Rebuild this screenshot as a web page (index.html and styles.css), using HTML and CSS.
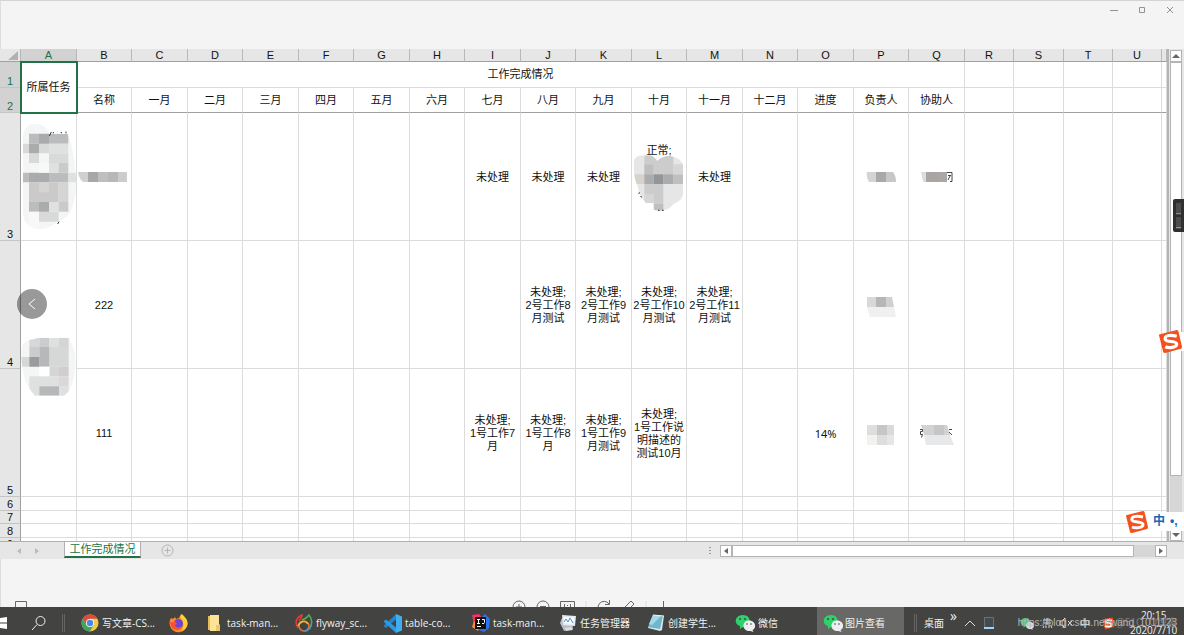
FILE: index.html
```
<!DOCTYPE html>
<html lang="zh-CN">
<head>
<meta charset="utf-8">
<title>图片查看</title>
<link rel="stylesheet" href="styles.css">
</head>
<body>
<div class="viewer">
  <header class="titlebar">
    <button class="win" aria-label="最小化"><svg width="8" height="8" viewBox="0 0 8 8"><path d="M0 4.500h8"/></svg></button>
    <button class="win" aria-label="最大化"><svg width="8" height="8" viewBox="0 0 8 8"><path d="M1.500 1.500h5v5h-5z"/></svg></button>
    <button class="win" aria-label="关闭"><svg width="8" height="8" viewBox="0 0 8 8"><path d="M1 1l6 6M7 1l-6 6"/></svg></button>
  </header>

  <main class="sheet">
    <div class="pane">
      <table class="grid">
        <colgroup><col class="c-num"><col class="c56"><col class="c55"><col class="c56"><col class="c55"><col class="c56"><col class="c55"><col class="c56"><col class="c55"><col class="c56"><col class="c55"><col class="c56"><col class="c55"><col class="c56"><col class="c55"><col class="c56"><col class="c55"><col class="c56"><col class="c49"><col class="c50"><col class="c49"><col class="c49"><col></colgroup>
        <thead>
          <tr><th class="corner"><svg width="10" height="9" viewBox="0 0 10 9"><path d="M10 0v9H0z"/></svg></th><th class="on">A</th><th>B</th><th>C</th><th>D</th><th>E</th><th>F</th><th>G</th><th>H</th><th>I</th><th>J</th><th>K</th><th>L</th><th>M</th><th>N</th><th>O</th><th>P</th><th>Q</th><th>R</th><th>S</th><th>T</th><th>U</th><th></th></tr>
        </thead>
        <tbody>
          <tr class="r-title"><th class="on">1</th><td class="selected" rowspan="2">所属任务</td><td colspan="16">工作完成情况</td><td></td><td></td><td></td><td></td><td></td></tr>
          <tr class="r-head"><th class="on">2</th><td>名称</td><td>一月</td><td>二月</td><td>三月</td><td>四月</td><td>五月</td><td>六月</td><td>七月</td><td>八月</td><td>九月</td><td>十月</td><td>十一月</td><td>十二月</td><td>进度</td><td>负责人</td><td>协助人</td><td></td><td></td><td></td><td></td><td></td></tr>
          <tr class="r-task"><th>3</th>
            <td><svg class="mosaic" width="55" height="107" viewBox="63 247 165 321">
              <clipPath id="m1"><path d="M69 285q4-36 40-36q30 0 38 30h56q18 40 24 118l2 28q-4 80-30 104l-22 14h-6q-20 22-52 22q-44 0-50-44z"/></clipPath>
              <g clip-path="url(#m1)"><path fill="#f4f5f5" d="M60 240h180v330H60z"/><path fill="#d9d9d9" d="M69 309h18v29H69zM117 309h30v29h-30zM87 338h30v29H87zM147 338h58v29h-58zM117 513h59v30h-59z"/><path fill="#bbbcbd" d="M87 279h30v30H87zM147 279h58v30h-58zM69 396h18v29H69zM147 396h58v29h-58zM87 484h30v29H87z"/><path fill="#a9abad" d="M117 279h30v30h-30zM87 309h30v29H87zM87 396h60v29H87zM117 484h30v29h-30z"/><path fill="#dfe1e1" d="M147 309h58v29h-58zM147 367h29v29h-29zM205 396h25v29h-25zM147 484h29v29h-29z"/><path fill="#cbcaca" d="M176 367h29v29h-29zM87 425h89v59H87zM176 484h29v29h-29z"/><path fill="#d5d4d3" d="M176 425h29v59h-29zM117 425h30v30h-30z"/><path fill="#f8f8f8" d="M117 367h30v29h-30zM87 513h30v52H87z"/></g>
              <path class="ink" d="M154 274l-6 12M160 274v4M182 276h4M198 273v5M177 543l-4 7"/>
            </svg></td>
            <td class="left"><svg class="mosaic" width="51" height="10" viewBox="0 0 51 10"><path fill="#d0d0cf" d="M0 0h10v10H5q-4-3-5-10z"/><path fill="#a5a8a8" d="M10 0h10v10H10z"/><path fill="#c0bfbf" d="M20 0h10v10H20z"/><path fill="#b7b9b8" d="M30 0h10v10H30z"/><path fill="#cbcdcc" d="M40 0h9v10h-9z"/></svg></td>
            <td></td><td></td><td></td><td></td><td></td><td></td><td>未处理</td><td>未处理</td><td>未处理</td>
            <td>正常;<svg class="mosaic" width="52" height="56" viewBox="545 338 156 168">
              <clipPath id="m2"><path d="M547 365q-2-20 20-26h28q14 4 23 17q14-15 38-15q32 6 39 25v90q-2 20-28 28q-12 18-36 21l-24-2v-20l-24-2q-18-18-24-50q-12-24-12-66z"/></clipPath>
              <g clip-path="url(#m2)"><path fill="#e5e6e5" d="M540 330h160v180H540z"/><path fill="#ccc" d="M579 338h87v28h-87zM607 366h60v30h-60zM579 425h57v30h-57zM607 455h29v29h-29z"/><path fill="#bfbfbd" d="M579 366h28v30h-28zM666 396h30v29h-30zM607 484h29v24h-29z"/><path fill="#d7d2cb" d="M545 396h34v29h-34z"/><path fill="#aaacae" d="M579 396h28v29h-28zM636 396h30v29h-30z"/><path fill="#949597" d="M607 396h29v29h-29z"/><path fill="#d5d7d7" d="M666 366h30v30h-30zM579 455h28v29h-28z"/></g>
              <path class="ink" d="M565 450l-3 5M567 462l5 3M620 504h5M632 504h5"/>
            </svg></td>
            <td>未处理</td><td></td><td></td>
            <td><svg class="mosaic" width="30" height="10" viewBox="0 0 30 10"><path fill="#d5d3d3" d="M1 0h9v10H3q-3-5-2-10z"/><path fill="#a9a9a9" d="M10 0h10v10H10z"/><path fill="#c5c7c8" d="M20 0h7q3 4 3 10H20z"/></svg></td>
            <td><svg class="mosaic" width="32" height="10" viewBox="0 0 32 10"><path fill="#dedbd9" d="M0 0h5v10H2z"/><path fill="#aaa5a3" d="M5 0h12v10H5z"/><path fill="#a8a8a8" d="M17 0h9v10h-9z"/><path class="ink1" d="M26 .500h5v9h-2M27 3.500h3M29 4l-2 4"/></svg></td>
            <td></td><td></td><td></td><td></td><td></td></tr>
          <tr class="r-task"><th>4</th>
            <td rowspan="2"><svg class="mosaic high" width="55" height="60" viewBox="62 321 165 180">
              <clipPath id="m3"><path d="M64 352q8-24 40-25l6-4h95q18 26 21 70q-2 60-20 90l-15 14h-87q-24-26-34-60q-10-50-6-85z"/></clipPath>
              <g clip-path="url(#m3)"><path fill="#f4f5f5" d="M60 320h170v180H60z"/><path fill="#d6d7d7" d="M87 321h30v30H87zM147 351h58v59h-58zM60 381h27v29H60z"/><path fill="#cbccce" d="M117 321h30v30h-30zM87 351h30v30H87z"/><path fill="#dfe0e0" d="M147 321h29v30h-29zM87 439h89v30H87zM87 469h30v30H87zM176 469h29v30h-29z"/><path fill="#d5d5d5" d="M176 321h29v30h-29zM147 410h29v29h-29z"/><path fill="#b7b8b9" d="M117 351h30v59h-30zM117 469h59v30h-59z"/><path fill="#9b9b9b" d="M87 381h30v29H87z"/><path fill="#d2cdce" d="M176 410h29v29h-29z"/><path fill="#dbd8d8" d="M176 439h29v30h-29z"/><path fill="#fff" d="M117 410h30v29h-30z"/></g>
            </svg></td>
            <td>222</td><td></td><td></td><td></td><td></td><td></td><td></td><td></td><td>未处理;<br>2号工作8<br>月测试</td><td>未处理;<br>2号工作9<br>月测试</td><td>未处理;<br>2号工作10<br>月测试</td><td>未处理;<br>2号工作11<br>月测试</td><td></td><td></td>
            <td><svg class="mosaic low" width="30" height="20" viewBox="0 0 30 20"><path fill="#f0f0f0" d="M1 10h27l2 10H4z"/><path fill="#d8d8d8" d="M1 0h9v10H1z"/><path fill="#b6b6b6" d="M10 0h10v10H10z"/><path fill="#d0d0d0" d="M20 0h6l2 10h-8z"/></svg></td>
            <td></td><td></td><td></td><td></td><td></td><td></td></tr>
          <tr class="r-task"><th>5</th><td>111</td><td></td><td></td><td></td><td></td><td></td><td></td><td>未处理;<br>1号工作7<br>月</td><td>未处理;<br>1号工作8<br>月</td><td>未处理;<br>1号工作9<br>月测试</td><td>未处理;<br>1号工作说<br>明描述的<br>测试10月</td><td></td><td></td><td class="pct">14%</td>
            <td><svg class="mosaic low" width="28" height="20" viewBox="0 0 28 20"><path fill="#dededd" d="M0 0h10v10H0zM10 10h10v10H10z"/><path fill="#c6c6c5" d="M10 0h10v10H10z"/><path fill="#d9dadb" d="M20 0h7v10h-7z"/><path fill="#f2f2f1" d="M0 10h10v10H0z"/><path fill="#e5e6e6" d="M20 10h7v10h-7z"/></svg></td>
            <td><svg class="mosaic low" width="34" height="20" viewBox="0 0 34 20"><path fill="#d2d2d2" d="M1 0h26l3 10H4z"/><path fill="#c6c6c5" d="M14 0h10v10H14z"/><path fill="#e7e8e9" d="M4 10h26l4 10H6z"/><path class="ink1" d="M0 4.500h2.500v2H.5v3h2l-1 3M29 4.500h3M29 7l3 3"/></svg></td>
            <td></td><td></td><td></td><td></td><td></td></tr>
          <tr class="r-even"><th>6</th><td></td><td></td><td></td><td></td><td></td><td></td><td></td><td></td><td></td><td></td><td></td><td></td><td></td><td></td><td></td><td></td><td></td><td></td><td></td><td></td><td></td><td></td></tr>
          <tr class="r-odd"><th>7</th><td></td><td></td><td></td><td></td><td></td><td></td><td></td><td></td><td></td><td></td><td></td><td></td><td></td><td></td><td></td><td></td><td></td><td></td><td></td><td></td><td></td><td></td></tr>
          <tr class="r-even"><th>8</th><td></td><td></td><td></td><td></td><td></td><td></td><td></td><td></td><td></td><td></td><td></td><td></td><td></td><td></td><td></td><td></td><td></td><td></td><td></td><td></td><td></td><td></td></tr>
          <tr class="r-odd"><th>9</th><td></td><td></td><td></td><td></td><td></td><td></td><td></td><td></td><td></td><td></td><td></td><td></td><td></td><td></td><td></td><td></td><td></td><td></td><td></td><td></td><td></td><td></td></tr>
        </tbody>
      </table>
    </div>
    <div class="vscroll">
      <button class="sbtn" aria-label="向上"><svg width="8" height="4" viewBox="0 0 8 4"><path d="M0 4l4-4 4 4z"/></svg></button>
      <div class="vthumb"></div>
      <div class="vrest"></div>
      <button class="sbtn" aria-label="向下"><svg width="8" height="4" viewBox="0 0 8 4"><path d="M0 0l4 4 4-4z"/></svg></button>
    </div>
  </main>

  <nav class="tabs">
    <div class="tabnav"><svg width="22" height="6" viewBox="0 0 22 6"><path d="M4 0v6L0 3zM18 0v6l4-3z"/></svg></div>
    <button class="tab">工作完成情况</button>
    <button class="add" aria-label="新工作表"><svg width="13" height="13" viewBox="0 0 13 13"><circle cx="6.500" cy="6.500" r="5.500"/><path d="M6.500 3.500v6M3.500 6.500h6"/></svg></button>
    <div class="hscroll">
      <svg class="dots" width="2" height="8" viewBox="0 0 2 8"><path d="M0 0h2v1H0zM0 3h2v1H0zM0 6h2v1H0z"/></svg>
      <button class="sbtn" aria-label="向左"><svg width="4" height="6" viewBox="0 0 4 6"><path d="M4 0v6L0 3z"/></svg></button>
      <div class="hthumb"></div>
      <div class="hrest"></div>
      <button class="sbtn" aria-label="向右"><svg width="4" height="6" viewBox="0 0 4 6"><path d="M0 0v6l4-3z"/></svg></button>
    </div>
  </nav>

  <div class="tools">
    <svg class="screen" width="14" height="14" viewBox="0 0 14 14"><path d="M.5 1.500h11v8H.5z"/></svg>
    <div class="toolset">
      <svg width="14" height="14" viewBox="0 0 14 14"><circle cx="7" cy="7" r="6"/><path d="M4 7h6M7 4v6"/></svg>
      <svg width="14" height="14" viewBox="0 0 14 14"><circle cx="7" cy="7" r="6"/><path d="M4 6.500h6"/></svg>
      <svg class="fit" width="15" height="14" viewBox="0 0 15 14"><path d="M.5 1.500h14v11H.5zM4.500 4v6M10.500 4v6M7.500 5v1"/></svg>
      <svg class="sep" width="2" height="14" viewBox="0 0 2 14"><path d="M1 1v12"/></svg>
      <svg width="14" height="14" viewBox="0 0 14 14"><path d="M12 4A6 6 0 1 0 13 8M12.500 0v4.500H8"/></svg>
      <svg width="14" height="14" viewBox="0 0 14 14"><path d="M2 12l1-4 7-7 3 3-7 7z"/></svg>
      <svg class="sep" width="2" height="14" viewBox="0 0 2 14"><path d="M1 1v12"/></svg>
      <svg width="14" height="14" viewBox="0 0 14 14"><path d="M6.500 1v9M3 7l3.500 4L10 7"/></svg>
    </div>
  </div>

  <footer class="taskbar">
    <svg class="start" width="7" height="14" viewBox="0 0 7 14"><path fill="#fff" d="M0 2l7-1v5.500H0zM0 7.500h7V13l-7-1z"/></svg>
    <svg class="search" width="16" height="16" viewBox="0 0 16 16"><circle cx="9.500" cy="6" r="4.500"/><path d="M6 9.500L1 15"/></svg>
    <div class="bar"></div>
    <button class="app"><svg width="18" height="18" viewBox="0 0 18 18"><circle cx="9" cy="9" r="8.500" fill="#f6c944"/><path fill="#dc4b3e" d="M1.600 4.700A8.500 8.500 0 0 1 16.400 4.700H9L5.300 11z"/><path fill="#3da55c" d="M1.600 4.700L5.300 11l7.400 0L8.800 17.500A8.500 8.500 0 0 1 1.600 4.700z"/><circle cx="9" cy="9" r="4" fill="#fff"/><circle cx="9" cy="9" r="3.200" fill="#4688f1"/></svg>写文章-CS...</button>
    <button class="app only" aria-label="Firefox"><svg width="19" height="19" viewBox="0 0 19 19"><path fill="#ff8a1f" d="M2 4l2 1 2-2 1 2 3-1 2-4c3 3 7 5 6.500 10.500A9 9 0 0 1 1 12C0 9 .5 6 2 4z"/><path fill="#ffcf35" d="M11 3l2-3c3 3 6 6 5.500 10s-4 7-7 7c4-3 4-8-.5-14z"/><circle cx="9.500" cy="9.500" r="4.500" fill="#6b45d4"/><path fill="#f4503d" d="M1 8c2 1 4-1 6 0l1 2-2 1c1 3 5 3 7 2-3 5-11 4-12-5z"/></svg></button>
    <button class="app folder"><svg width="14" height="18" viewBox="0 0 14 18"><path fill="#e9bd58" d="M1 2h7v14H1z"/><path fill="#fbe397" d="M3 1h9v9l1 1v6H3z"/><path fill="#ecc766" d="M9 11h4v6H9z"/></svg>task-man...</button>
    <button class="app"><svg width="18" height="18" viewBox="0 0 18 18" fill="none" stroke-width="1.600"><circle cx="9" cy="12" r="5" stroke="#e8772c"/><path stroke="#e04038" d="M3 14C-1 8 2 3 7 1c0 3-1 4-3 6"/><path stroke="#4eae55" d="M7 6c3-1 5-2 7-5 3 4 4 9 0 14"/><path stroke="#3b8fd8" d="M9 17c3 1 6-2 7-5"/><path stroke="#f0b52f" d="M3 12c2-5 7-6 10-2"/></svg>flyway_sc...</button>
    <button class="app"><svg width="19" height="19" viewBox="0 0 19 19"><path fill="#1f86d0" d="M13 0v5.500L3 14l-2-1.500v-1z"/><path fill="#2a9ae4" d="M1 7l2-1.500 10 8V19L1 8z"/><path fill="#41adf0" d="M13 0l6 2.500v14L13 19z"/></svg>table-co...</button>
    <button class="app"><svg width="19" height="18" viewBox="0 0 19 18"><path fill="#f7306c" d="M1 1l7-1 4 5-9 6z"/><path fill="#fb8a31" d="M3 7l-2 6 6 4 2-5z"/><path fill="#2c73ef" d="M11 3l3-3 5 5-1 9-5 4-5-2z"/><path fill="#111" d="M4 3h11v12H4z"/><path d="M6 5.500h3M7.500 5v4M6 9.500h3M11 5.500h2.500v3q0 1.500-2.500 1M6 12.500h4" fill="none" stroke="#fff"/></svg>task-man...</button>
    <button class="app"><svg width="18" height="18" viewBox="0 0 18 18"><path fill="#b8bfc6" d="M1 9l2-5 10 1 1 10-9 2z"/><path fill="#e5ebef" d="M3 1l14 1-1 10-12-1z"/><path fill="#fff" d="M5 3l10 1-1 6-9-1z"/><path d="M5 8l2-3 2 3 2-4 3 5" fill="none" stroke="#3994d0"/><path fill="#d8dde0" d="M6 14l6-1 2 3-7 1z"/></svg>任务管理器</button>
    <button class="app"><svg width="18" height="18" viewBox="0 0 18 18"><path fill="#d9e6e8" d="M6 1l11 1-2 14-2 1-12-3z"/><path fill="#6fb6cd" d="M6 1l10 1-3 13-12-2z"/><path fill="#a5d9e7" d="M6 1l8 1-9 9-3-1z"/><path d="M6 1l11 1" stroke="#eef3f3"/></svg>创建学生...</button>
    <button class="app"><svg width="20" height="18" viewBox="0 0 20 18"><path fill="#2ed16b" d="M8 1c9 0 9 12 0 12l-3 2v-3C-2 10 0 1 8 1z"/><path fill="#eee" d="M13.500 6.500c8 0 8 8 4 9.500l1 2-3-1c-9 1-9-10-2-10.500z"/><circle cx="5" cy="5" r="1"/><circle cx="10" cy="5" r="1"/><circle cx="12" cy="10" r=".8"/><circle cx="16" cy="10" r=".8"/></svg>微信</button>
    <button class="app active"><svg width="20" height="18" viewBox="0 0 20 18"><path fill="#2ed16b" d="M8 1c9 0 9 12 0 12l-3 2v-3C-2 10 0 1 8 1z"/><path fill="#eee" d="M13.500 6.500c8 0 8 8 4 9.500l1 2-3-1c-9 1-9-10-2-10.500z"/><circle cx="5" cy="5" r="1"/><circle cx="10" cy="5" r="1"/><circle cx="12" cy="10" r=".8"/><circle cx="16" cy="10" r=".8"/></svg>图片查看</button>
    <div class="tray">
      <div class="bar"></div>
      <span>桌面</span><span class="more">»</span>
      <svg class="up" width="12" height="8" viewBox="0 0 12 8"><path d="M1 7l5-5 5 5" fill="none" stroke="#ddd"/></svg>
      <svg class="box" width="10" height="12" viewBox="0 0 10 12"><path d="M.5.5h9v10h-9z" fill="#434b50" stroke="#65737c"/><path d="M0 11h10" stroke="#9ad6f8" stroke-width="2"/></svg>
      <svg class="wx" width="14" height="13" viewBox="0 0 20 18"><path fill="#42cd78" d="M8 1c9 0 9 12 0 12l-3 2v-3C-2 10 0 1 8 1z"/><path fill="#ddd" d="M13.500 6.500c8 0 8 8 4 9.500l1 2-3-1c-9 1-9-10-2-10.500z"/></svg>
      <svg class="line" width="40" height="12" viewBox="0 0 40 12"><path d="M1 3h8M5 1v7M2 6h7M1 11l1-2M4 11V9M7 11V9M10 11L9 9M18 4h2l3-3v10l-3-3h-2zM26 4l4 4M30 4l-4 4"/></svg>
      <span class="ime">中</span>
      <svg class="sogou" width="13" height="13" viewBox="0 0 22 22"><path fill="#f04c1c" d="M1 4l17-3 3 16-16 4z"/><path d="M17 6C8 4 5 7 6 9s10 0 10 4-7 4-11 2" fill="none" stroke="#fff" stroke-width="3"/></svg>
      <time class="clock">20:15<br>2020/7/10</time>
    </div>
    <span class="mark mark2">@51CTO博客</span>
    <span class="mark">https://blog.csdn.net/wang_1011123</span>
  </footer>

  <button class="prev" aria-label="上一张"><svg width="10" height="12" viewBox="0 0 10 12"><path d="M8 1L2 6l6 5"/></svg></button>
  <div class="meter"><svg width="11" height="33" viewBox="0 0 11 33"><path fill="#4d4d4d" d="M3 4h5v12H3zM3 18h5v12H3z"/><path stroke="#c57a24" d="M3 14.500h5"/><path stroke="#63c32a" d="M3 28.500h5"/></svg></div>
  <div class="dock"><svg width="23" height="23" viewBox="0 0 22 22"><path fill="#f4511e" d="M0 5q0-1 1-1L17 0q1 0 1.500 1L22 16q0 2-1 2L6 22q-2 0-2-1z"/><path d="M17 6C9 4 5 6 6 9s11 1 11 4.500-8 4-11 2.500" fill="none" stroke="#fff" stroke-width="3"/></svg></div>
  <div class="imebar"><svg width="22" height="22" viewBox="0 0 22 22"><path fill="#f4511e" d="M0 5q0-1 1-1L17 0q1 0 1.500 1L22 16q0 2-1 2L6 22q-2 0-2-1z"/><path d="M17 6C9 4 5 6 6 9s11 1 11 4.500-8 4-11 2.500" fill="none" stroke="#fff" stroke-width="3"/></svg><span>中</span><span>•,</span></div>
</div>
</body>
</html>
```
FILE: styles.css
```
* { box-sizing: border-box; }
body {
  margin: 0;
  background: #f4f4f4;
  font-family: "Liberation Sans", "Noto Sans CJK SC", sans-serif;
  font-size: 11px;
  line-height: 13px;
  color: #111;
}
button {
  margin: 0;
  padding: 0;
  border: 0;
  background: none;
  font: inherit;
  color: inherit;
  display: flex;
  align-items: center;
}
svg { display: block; flex: none; }
.viewer {
  position: relative;
  display: flex;
  flex-direction: column;
  height: 100vh;
  overflow: hidden;
}

.titlebar {
  flex: none;
  display: flex;
  justify-content: flex-end;
  gap: 20px;
  height: 49px;
  padding: 5px 10px 0;
  border-top: 1px solid #d4d4d4;
  border-left: 1px solid #ddd;
  align-items: flex-start;
}
.win svg { fill: none; stroke: #929292; }

.sheet {
  flex: 1;
  min-height: 0;
  display: flex;
  background: #e6e6e6;
}
.pane {
  flex: 1;
  min-width: 0;
  overflow: hidden;
  background: #fff;
  border-right: 1px solid #b4b4b4;
  border-bottom: 1px solid #b0b0b0;
}
.grid {
  width: 100%;
  table-layout: fixed;
  border-collapse: separate;
  border-spacing: 0;
}
.c-num { width: 21px; }
.c55 { width: 55px; }
.c56 { width: 56px; }
.c49 { width: 49px; }
.c50 { width: 50px; }
.grid th, .grid td {
  padding: 0;
  text-align: center;
  border-right: 1px solid #dcdcdc;
  border-bottom: 1px solid #dcdcdc;
}
.grid th {
  font-weight: 400;
  line-height: 12px;
  background: #e6e6e6;
}
.grid thead th {
  height: 13px;
  border-right-color: #b8b8b8;
  border-bottom-color: #a0a0a0;
}
.grid tbody th {
  vertical-align: bottom;
  border-right-color: #a0a0a0;
  border-bottom-color: #c4c4c4;
}
.grid th.on { background: #d2d2d2; color: #217346; }
.corner svg { margin: 0 2px 0 auto; fill: #b2b2b2; }
.grid td.selected { outline: 2px solid #217346; outline-offset: -1px; }
.grid td.left { text-align: left; padding-left: 1px; }
.r-title { height: 26px; }
.r-head { height: 25px; }
.r-head td, .grid td.selected { border-bottom-color: #a0a0a0; }
.grid .r-task td { padding-top: 2px; }
.grid td.pct { font-family: "Noto Sans", sans-serif; }
.r-task { height: 128px; }
.r-even { height: 14px; }
.r-odd { height: 13px; }
.mosaic { margin: -2px auto 0; }
.mosaic.low { margin-top: 2px; }
.mosaic.high { margin-bottom: 3px; }
.left .mosaic { margin-left: 0; }
.ink { fill: none; stroke: #333; stroke-width: 3; }
.ink1 { fill: none; stroke: #444; }

.vscroll {
  flex: none;
  display: flex;
  flex-direction: column;
  width: 16px;
  padding: 1px 2px 0 1px;
  border-left: 1px solid #b4b4b4;
  border-bottom: 1px solid #b0b0b0;
}
.sbtn {
  flex: none;
  justify-content: center;
  width: 12px;
  height: 12px;
  background: #fff;
  border: 1px solid #b4b4b4;
}
.sbtn svg { fill: #666; }
.vthumb { flex: 415; width: 12px; background: #fff; border: 1px solid #b4b4b4; }
.vrest { flex: 53; width: 12px; background: #d6d6d6; }

.tabs {
  flex: none;
  display: flex;
  align-items: flex-start;
  height: 17px;
  background: #e6e6e6;
}
.tabnav { width: 64px; padding: 6px 0 0 17px; }
.tabnav svg { fill: #bbb; }
.tab {
  justify-content: center;
  width: 77px;
  height: 16px;
  background: #fff;
  color: #217346;
  border: 1px solid #b0b0b0;
  border-top: 0;
  border-bottom: 2px solid #217346;
}
.add { margin: 2px 0 0 20px; }
.add svg { fill: none; stroke: #b4b4b4; }
.hscroll {
  display: flex;
  align-items: center;
  width: 458px;
  margin: 3px 17px 0 auto;
}
.dots { margin-right: 9px; fill: #999; }
.hthumb { flex: 403; height: 12px; background: #fff; border: 1px solid #b4b4b4; }
.hrest { flex: 21; height: 12px; background: #d6d6d6; }

.tools {
  flex: none;
  display: flex;
  align-items: flex-start;
  height: 48px;
  padding-top: 41px;
  padding-left: 14px;
  border-left: 1px solid #ddd;
  overflow: hidden;
}
.tools svg { fill: none; stroke: #666; }
.toolset { display: flex; gap: 10px; margin-left: 483px; }
.toolset .sep { stroke: #ddd; }

.taskbar {
  position: relative;
  flex: none;
  display: flex;
  height: 28px;
  background: #434341;
  color: #f2f2f2;
  font-family: "Open Sans", "Noto Sans CJK SC", sans-serif;
  font-size: 10px;
  overflow: hidden;
}
.start { margin-top: 9px; }
.search { margin: 8px 0 0 24px; fill: none; stroke: #eee; stroke-width: 1; }
.bar {
  flex: none;
  width: 3px;
  height: 18px;
  margin-top: 7px;
  border: solid #646464;
  border-width: 0 1px;
}
.search + .bar { margin-left: 15px; margin-right: 10px; }
.app {
  flex: none;
  gap: 3px;
  width: 88px;
  height: 32px;
  padding-left: 6px;
  white-space: nowrap;
}
.app.only { width: 38px; }
.app.folder { gap: 6px; }
.app.active { background: #686867; gap: 2px; width: 87px; }
.app circle[r="1"], .app circle[r=".8"] { fill: #444; }
.tray {
  flex: 1;
  display: flex;
  align-items: center;
  height: 32px;
  padding-left: 10px;
}
.tray .bar { margin: 0 7px 0 0; }
.more { font-size: 14px; padding: 0 7px 16px 6px; }
.box { margin: 0 26px 0 8px; }
.line { margin-left: 8px; fill: none; stroke: #ddd; }
.ime { margin: 0 12px 0 -2px; }
.clock { margin-left: 15px; text-align: center; line-height: 15px; }
.mark {
  position: absolute;
  right: 7px;
  top: 9px;
  font-family: "Liberation Sans", sans-serif;
  color: #b4b4b4;
  white-space: nowrap;
}
.mark2 { color: #7c7c7c; font-family: "Liberation Sans", "Noto Sans CJK SC", sans-serif; }

.prev {
  position: absolute;
  left: 17px;
  top: 289px;
  width: 30px;
  height: 30px;
  justify-content: center;
  border-radius: 50%;
  background: rgba(0, 0, 0, .4);
}
.prev svg { fill: none; stroke: #fff; }
.meter {
  position: absolute;
  right: 0;
  top: 199px;
  background: #303030;
  border-radius: 2px 0 0 2px;
}
.dock, .imebar {
  position: absolute;
  right: 0;
  display: flex;
  align-items: center;
  height: 19px;
  background: linear-gradient(90deg, transparent 18px, #fff 18px);
}
.dock { top: 332px; width: 25px; }
.imebar {
  top: 512px;
  width: 58px;
  color: #1569b8;
  font-weight: 700;
  font-size: 12px;
  gap: 5px;
}
```
